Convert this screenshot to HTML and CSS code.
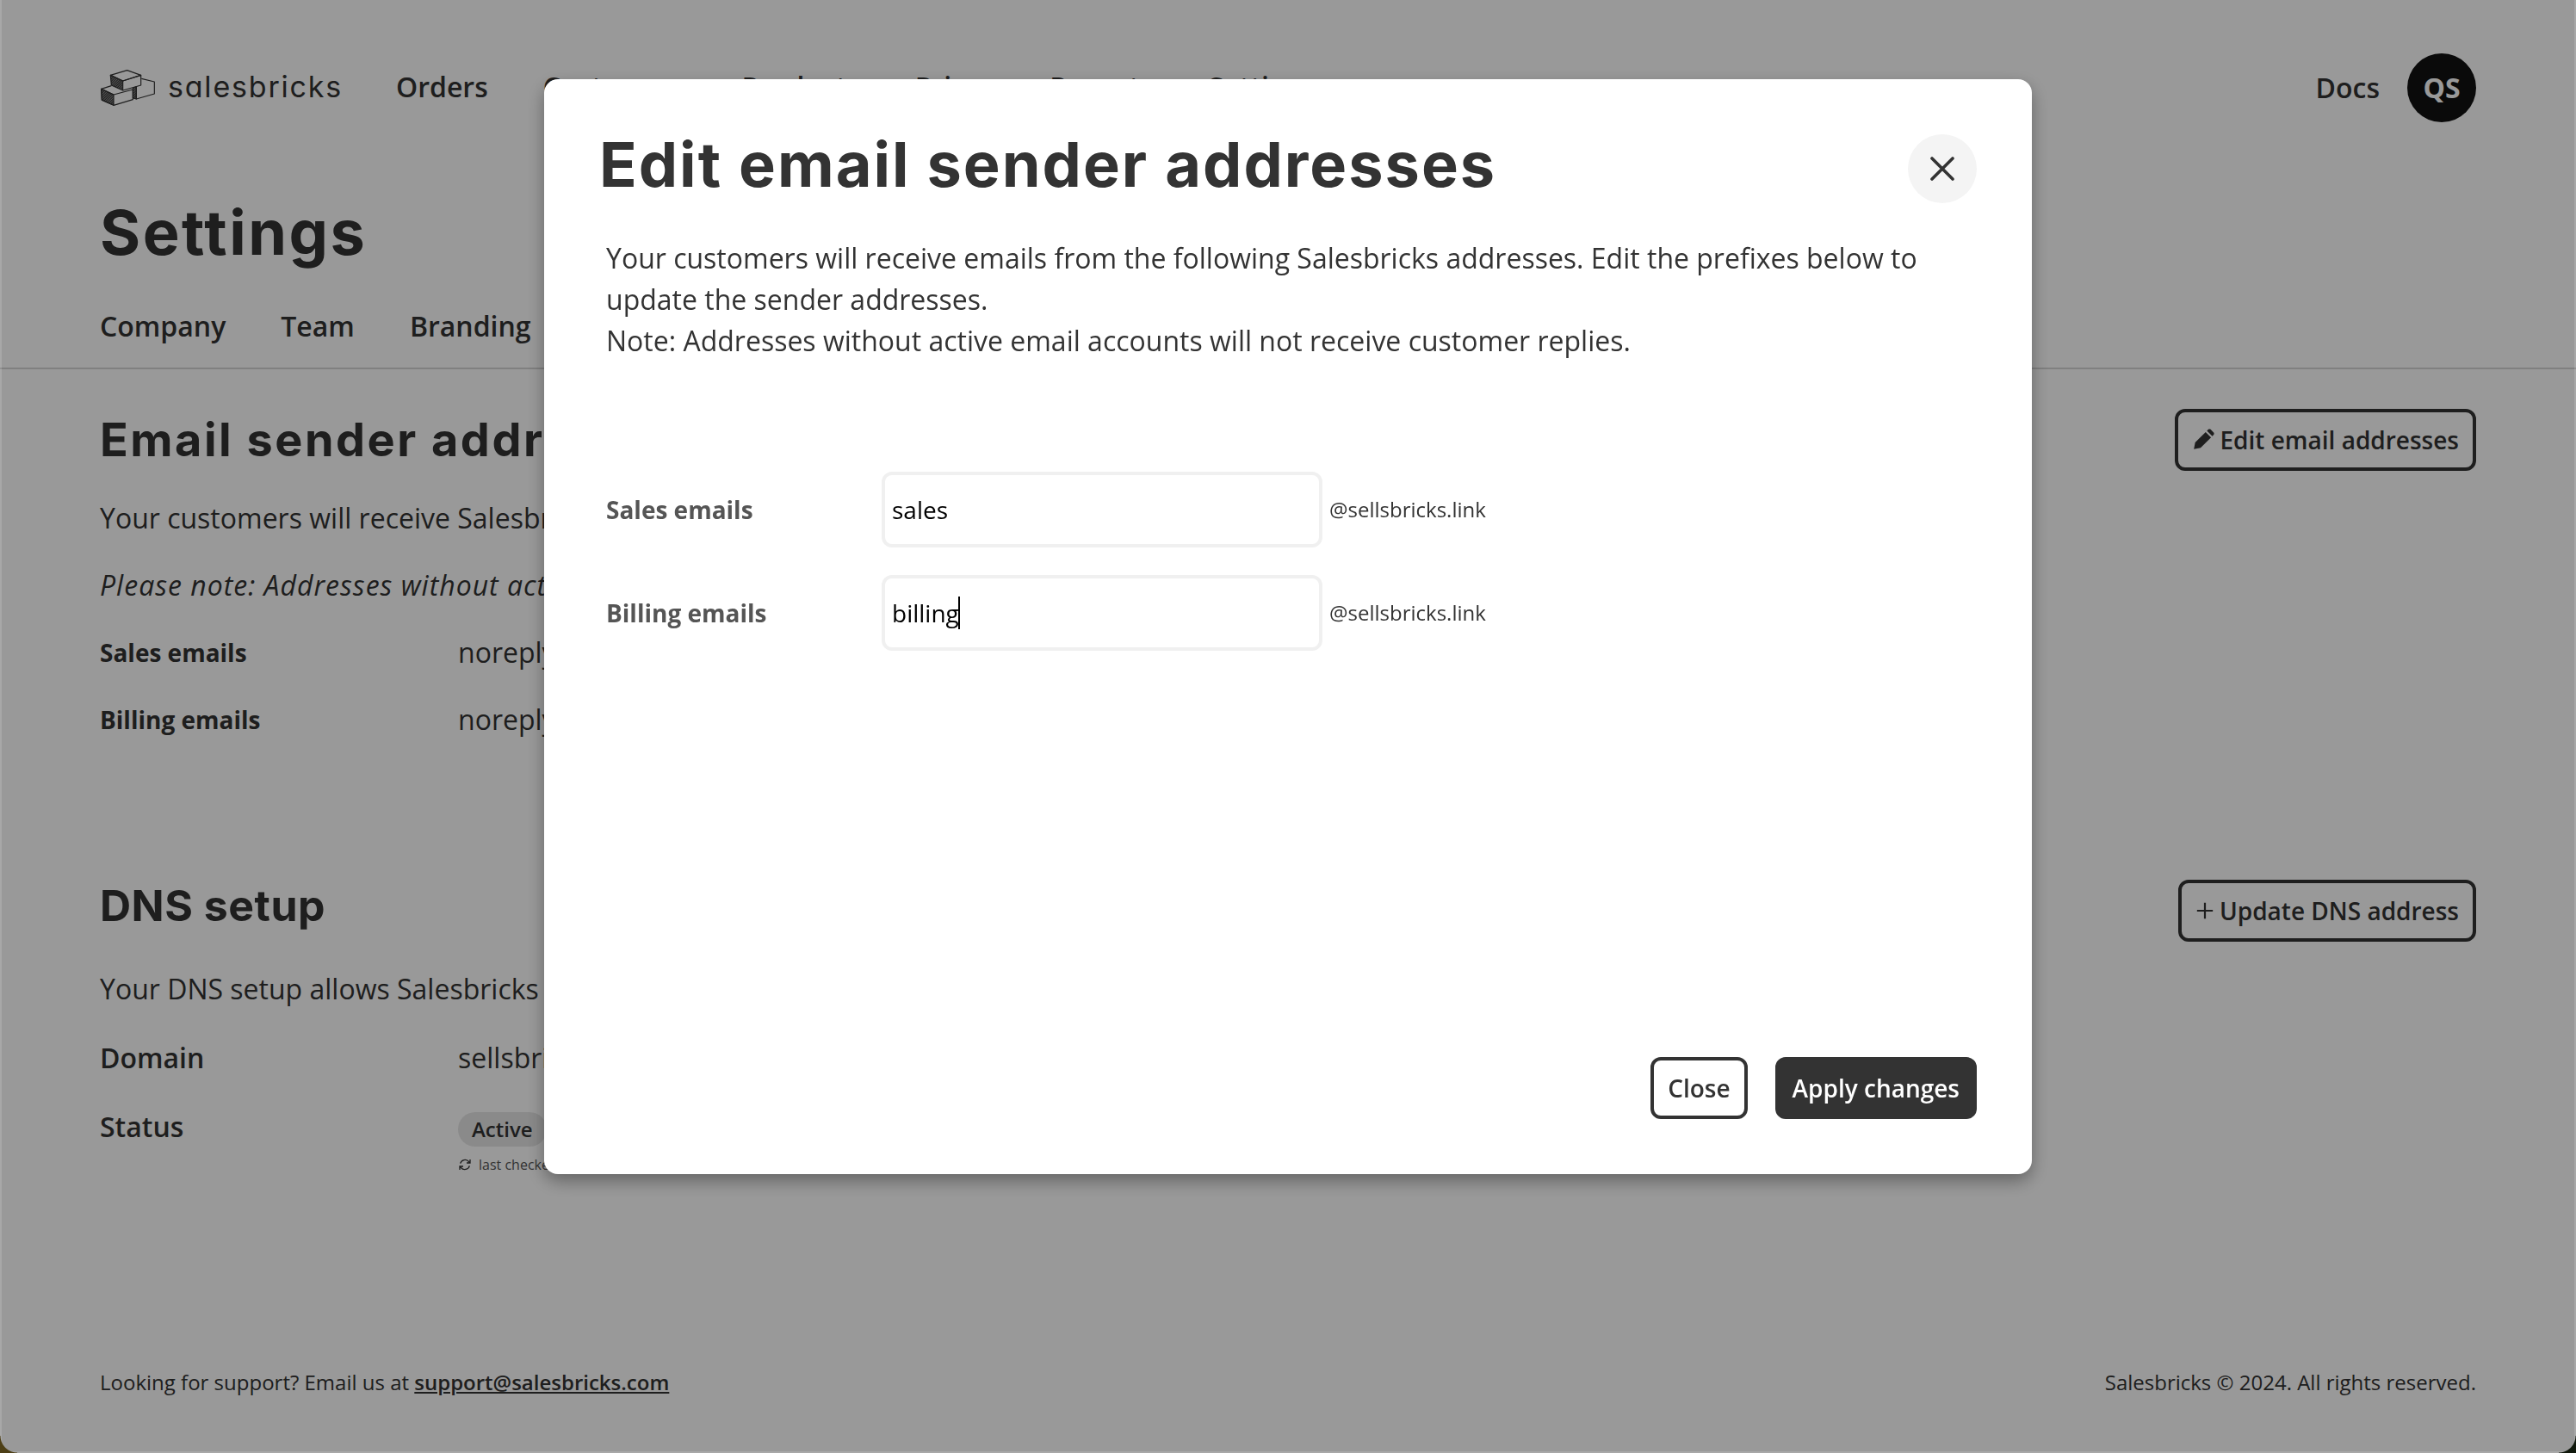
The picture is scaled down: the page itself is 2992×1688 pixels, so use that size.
FILE: index.html
```html
<!DOCTYPE html>
<html lang="en">
<head>
  <meta charset="UTF-8" />
  <title>Settings</title>
  <link rel="stylesheet" href="styles.css">
</head>
<body>

  <div class="app">
    <header class="topbar">
      <div class="brand">
        <svg class="brand-icon" viewBox="85 60 195 135" fill="none" stroke="#333" stroke-width="3.500" stroke-linejoin="round">
          <defs>
            <pattern id="hatch" width="6" height="6" patternUnits="userSpaceOnUse" patternTransform="rotate(45)">
              <rect width="3" height="6" fill="#333"></rect>
            </pattern>
          </defs>
          <path d="M230 97 275 108V150L212 168V125" />
          <path d="M200 130 212 125V168L200 165Z" fill="url(#hatch)" />
          <path d="M122 85 165 105 228 85 180 68Z" />
          <path d="M122 85 165 105V138L125 120Z" fill="url(#hatch)" />
          <path d="M165 105 228 85V120L165 138" />
          <path d="M90 133 133 153 200 135V170L133 190 92 172Z" />
          <path d="M90 133 133 153V190L92 172Z" fill="url(#hatch)" />
          <path d="M90 133 125 122" />
        </svg>
        <span class="brand-name">salesbricks</span>
      </div>
      <nav class="main-nav">
        <a>Orders</a>
        <a>Customers</a>
        <a>Products</a>
        <a>Prices</a>
        <a>Reports</a>
        <a>Settings</a>
      </nav>
      <div class="topbar-right">
        <a class="docs-link">Docs</a>
        <div class="avatar">QS</div>
      </div>
    </header>

    <h1 class="page-title">Settings</h1>

    <nav class="tabs">
      <a>Company</a>
      <a>Team</a>
      <a>Branding</a>
      <a>Emails</a>
    </nav>

    <section class="panel panel-email">
      <div class="panel-head">
        <h2>Email sender addresses</h2>
        <button class="btn btn-outline">
          <svg class="btn-icon" viewBox="0 0 24 24"><path fill="#333" d="M2 22l1.400-7.200L14.600 3.600l5.800 5.800L9.200 20.600 2 22zM16 2.200l1.600-1.400c.7-.6 1.600-.6 2.300 0l3.300 3.300c.6.7.6 1.600 0 2.300L21.800 8z" /></svg>
          Edit email addresses
        </button>
      </div>
      <p>Your customers will receive Salesbricks emails from these addresses.</p>
      <p class="note">Please note: Addresses without active email accounts will not receive replies.</p>
      <div class="info-row info-row-small"><span class="info-label">Sales emails</span><span>noreply@sellsbricks.link</span></div>
      <div class="info-row info-row-small"><span class="info-label">Billing emails</span><span>noreply@sellsbricks.link</span></div>
    </section>

    <section class="panel panel-dns">
      <div class="panel-head">
        <h2>DNS setup</h2>
        <button class="btn btn-outline">
          <svg class="btn-icon btn-icon-plus" viewBox="0 0 24 24"><path stroke="#333" stroke-width="2.400" d="M12 2v20M2 12h20" /></svg>
          Update DNS address
        </button>
      </div>
      <p>Your DNS setup allows Salesbricks to send emails from your domain.</p>
      <div class="info-row"><span class="info-label">Domain</span><span>sellsbricks.link</span></div>
      <div class="info-row">
        <span class="info-label">Status</span>
        <div>
          <span class="pill">Active</span>
          <div class="last-checked">
            <svg viewBox="0 0 24 24" fill="none" stroke="#333" stroke-width="2"><path d="M4 10a8.500 8.500 0 0 1 15-3l2 2M20 14a8.500 8.500 0 0 1-15 3l-2-2M21 3v6h-6M3 21v-6h6" /></svg>
            last checked 2 minutes ago
          </div>
        </div>
      </div>
    </section>

    <footer class="footer">
      <span>Looking for support? Email us at <a class="support-link">support@salesbricks.com</a></span>
      <span>Salesbricks © 2024. All rights reserved.</span>
    </footer>
  </div>

  <div class="overlay">
    <div class="modal">
      <div class="modal-head">
        <h2>Edit email sender addresses</h2>
        <button class="modal-x">
          <svg viewBox="0 0 28 28" fill="none" stroke="#333" stroke-width="3.600" stroke-linecap="round"><path d="M2 2l24 24M26 2L2 26" /></svg>
        </button>
      </div>

      <p class="modal-text">
        Your customers will receive emails from the following Salesbricks addresses. Edit the prefixes below to update the sender addresses.<br>
        Note: Addresses without active email accounts will not receive customer replies.
      </p>

      <div class="form-rows">
        <div class="form-row">
          <label>Sales emails</label>
          <div class="field">sales</div>
          <span class="suffix">@sellsbricks.link</span>
        </div>
        <div class="form-row">
          <label>Billing emails</label>
          <div class="field">billing<span class="caret"></span></div>
          <span class="suffix">@sellsbricks.link</span>
        </div>
      </div>

      <div class="modal-actions">
        <button class="btn btn-outline">Close</button>
        <button class="btn btn-solid">Apply changes</button>
      </div>
    </div>
  </div>

  <div class="corner corner-left"></div>
  <div class="corner corner-right"></div>

</body>
</html>
```

FILE: styles.css
```css
html, body {
  margin: 0;
  height: 1688px;
  overflow: hidden;
}

body {
  font-family: 'Open Sans', sans-serif;
  font-size: 32px;
  line-height: 48px;
  color: #333;
  background-color: #fff;
}

h1, h2 {
  font-family: 'Inter', sans-serif;
  font-weight: 700;
  margin: 0;
}

p {
  margin: 0;
}

.app {
  display: flex;
  flex-direction: column;
  height: 1688px;
  box-sizing: border-box;
}

.topbar {
  display: flex;
  align-items: center;
  height: 80px;
  margin-top: 62px;
  padding: 0 116px;
}

.brand {
  display: flex;
  align-items: center;
  gap: 14px;
  padding-bottom: 2px;
}

.brand-icon {
  width: 65px;
  height: 45px;
}

.brand-name {
  font-family: 'Inter', sans-serif;
  font-feature-settings: "cv11";
  font-size: 34px;
  letter-spacing: 1.800px;
}

.main-nav {
  display: flex;
  gap: 64px;
  margin-left: 62px;
  padding-bottom: 2px;
  font-weight: 600;
}

.topbar-right {
  display: flex;
  align-items: center;
  gap: 32px;
  margin-left: auto;
}

.docs-link {
  font-weight: 600;
}

.avatar {
  width: 80px;
  height: 80px;
  border-radius: 50%;
  background-color: #111;
  color: #fff;
  font-weight: 700;
  display: flex;
  align-items: center;
  justify-content: center;
}

.page-title {
  font-size: 72px;
  line-height: 88px;
  letter-spacing: 2.500px;
  margin: 84px 116px 0;
}

.tabs {
  display: flex;
  gap: 64px;
  margin-top: 41px;
  padding: 0 116px 24px;
  font-weight: 600;
  border-bottom: 2px solid #d5d5d5;
}

.panel {
  padding: 0 116px;
}

.panel-email {
  margin-top: 46px;
}

.panel-dns {
  margin-top: 162px;
}

.panel-head {
  display: flex;
  align-items: center;
  justify-content: space-between;
  height: 72px;
  margin-bottom: 31px;
}

.panel-head h2 {
  font-size: 54px;
  letter-spacing: 2.500px;
}

.panel-dns .panel-head {
  margin-bottom: 31px;
}

.panel-dns .panel-head h2 {
  font-size: 50px;
  letter-spacing: 0.500px;
  margin-bottom: 13px;
}

.panel .note {
  font-style: italic;
  letter-spacing: 1px;
  margin-top: 30px;
}

.info-row {
  display: flex;
  margin-top: 32px;
}

.info-row-small {
  margin-top: 30px;
}

.info-row-small .info-label {
  font-size: 28px;
  font-weight: 700;
}

.info-label {
  width: 416px;
  font-weight: 600;
}

.pill {
  display: inline-block;
  padding: 0 16px;
  font-size: 24px;
  line-height: 40px;
  font-weight: 600;
  background-color: #e6e6e6;
  border-radius: 20px;
}

.last-checked {
  display: flex;
  align-items: center;
  gap: 8px;
  font-size: 16px;
  line-height: 24px;
  margin-top: 8px;
  color: #555;
}

.last-checked svg {
  width: 16px;
  height: 16px;
}

.footer {
  display: flex;
  justify-content: space-between;
  margin-top: auto;
  padding: 0 116px 63px;
  font-size: 24px;
  line-height: 38px;
}

.support-link {
  font-weight: 600;
  text-decoration: underline;
}

.btn {
  display: inline-flex;
  align-items: center;
  justify-content: center;
  height: 72px;
  box-sizing: border-box;
  padding: 0 16px;
  font-family: 'Open Sans', sans-serif;
  font-size: 28px;
  font-weight: 600;
  border-radius: 12px;
  cursor: pointer;
}

.btn-outline {
  background-color: #fff;
  color: #333;
  border: 4px solid #333;
}

.panel .btn-outline {
  background-color: transparent;
}

.btn-solid {
  background-color: #333;
  color: #fff;
  border: 4px solid #333;
}

.btn-icon {
  width: 26px;
  height: 26px;
  margin-right: 6px;
}

.btn-icon-plus {
  width: 22px;
  height: 22px;
}

/* dimmed page + window edge of the screenshot */
.overlay {
  position: fixed;
  inset: 0;
  display: flex;
  justify-content: center;
  align-items: flex-start;
  padding-top: 92px;
  background-color: rgba(0, 0, 0, 0.4);
  box-shadow: inset 2px 0 0 rgba(255, 255, 255, 0.14), inset -2px 0 0 rgba(255, 255, 255, 0.14), inset 0 -2px 0 rgba(255, 255, 255, 0.14);
}

.modal {
  display: flex;
  flex-direction: column;
  width: 1728px;
  height: 1272px;
  box-sizing: border-box;
  padding: 64px;
  background-color: #fff;
  border-radius: 16px;
  box-shadow: 0 8px 20px rgba(0, 0, 0, 0.35);
}

.modal-head {
  display: flex;
  align-items: center;
  justify-content: space-between;
}

.modal-head h2 {
  font-size: 72px;
  line-height: 70px;
  letter-spacing: 2px;
  margin-bottom: 10px;
}

.modal-x {
  display: flex;
  align-items: center;
  justify-content: center;
  width: 80px;
  height: 80px;
  padding: 0;
  border: none;
  border-radius: 50%;
  background-color: #f4f4f4;
}

.modal-x svg {
  width: 28px;
  height: 28px;
}

.modal-text {
  margin: 40px 0 0 8px;
  max-width: 1560px;
}

.form-rows {
  display: flex;
  flex-direction: column;
  gap: 32px;
  margin: 128px 0 0 8px;
}

.form-row {
  display: flex;
  align-items: center;
}

.form-row label {
  width: 320px;
  font-size: 28px;
  font-weight: 700;
  color: #555;
}

.field {
  width: 512px;
  height: 88px;
  box-sizing: border-box;
  padding: 0 8px;
  display: flex;
  align-items: center;
  font-size: 28px;
  color: #000;
  border: 4px solid #f0f0f0;
  border-radius: 12px;
}

.caret {
  width: 2px;
  height: 38px;
  margin-left: -1px;
  background-color: #000;
}

.suffix {
  margin-left: 8px;
  font-size: 24px;
}

.modal-actions {
  display: flex;
  justify-content: flex-end;
  gap: 32px;
  margin-top: auto;
}

.corner {
  position: fixed;
  bottom: 0;
  width: 20px;
  height: 20px;
}

.corner-left {
  left: 0;
  background: radial-gradient(circle at 100% 0, transparent 19px, #4d3f16 20px);
}

.corner-right {
  right: 0;
  background: radial-gradient(circle at 0 0, transparent 19px, #10180c 20px);
}
```
